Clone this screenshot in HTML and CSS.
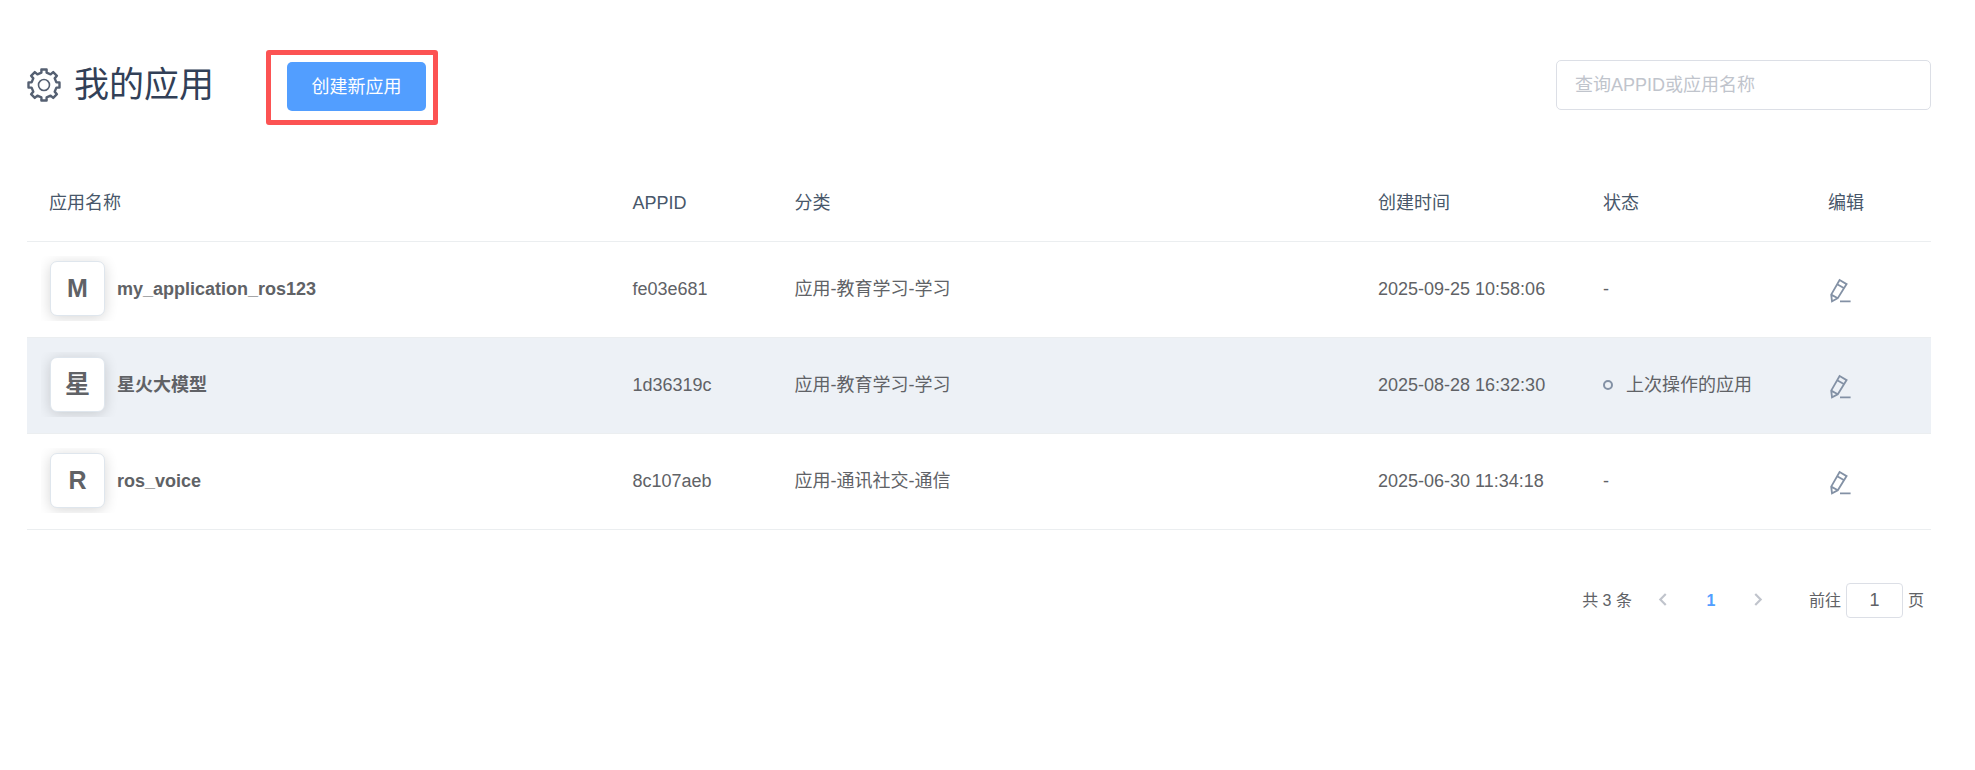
FILE: index.html
```html
<!DOCTYPE html>
<html lang="zh-CN">
<head>
  <meta charset="UTF-8">
  <title>我的应用</title>
  <link rel="stylesheet" href="styles.css">
</head>
<body>
  <svg class="symbols" aria-hidden="true">
    <symbol id="icon-edit" viewBox="0 0 22 26">
      <path d="M9.6 3 16.6 7.1 7.8 21.2 2 24.4 1.2 17.6ZM7.2 7.2l7 4M1.2 17.6l6.6 3.6M10 24.4h10.6"/>
    </symbol>
  </svg>

  <div class="header">
    <h1 class="title">
      <svg class="title-icon" viewBox="0 0 34 34">
        <path d="M14.4 1.5H19.6V4.6L23.6 6.3 26.2 4.1 29.9 7.8 27.7 10.4 29.4 14.4H32.5V19.6H29.4L27.7 23.6 29.9 26.2 26.2 29.9 23.6 27.7 19.6 29.4V32.5H14.4V29.4L10.4 27.7 7.8 29.9 4.1 26.2 6.3 23.6 4.6 19.6H1.5V14.4H4.6L6.3 10.4 4.1 7.8 7.8 4.1 10.4 6.3 14.4 4.6Z"/>
        <circle cx="17" cy="17" r="5.5"/>
      </svg>
      我的应用
    </h1>
    <div class="mark"><button class="btn-create" type="button">创建新应用</button></div>
    <input class="search" type="text" placeholder="查询APPID或应用名称" aria-label="查询APPID或应用名称">
  </div>

  <table class="app-table">
    <colgroup>
      <col><col class="col-id"><col><col class="col-time"><col class="col-status"><col class="col-edit">
    </colgroup>
    <thead>
      <tr>
        <th>应用名称</th>
        <th>APPID</th>
        <th>分类</th>
        <th>创建时间</th>
        <th>状态</th>
        <th>编辑</th>
      </tr>
    </thead>
    <tbody>
      <tr>
        <td><div class="app"><span class="avatar">M</span><span class="name">my_application_ros123</span></div></td>
        <td>fe03e681</td>
        <td>应用-教育学习-学习</td>
        <td>2025-09-25 10:58:06</td>
        <td>-</td>
        <td><button class="btn-edit" type="button" aria-label="编辑"><svg><use href="#icon-edit"/></svg></button></td>
      </tr>
      <tr class="active">
        <td><div class="app"><span class="avatar">星</span><span class="name">星火大模型</span></div></td>
        <td>1d36319c</td>
        <td>应用-教育学习-学习</td>
        <td>2025-08-28 16:32:30</td>
        <td><div class="status"><i class="dot"></i>上次操作的应用</div></td>
        <td><button class="btn-edit" type="button" aria-label="编辑"><svg><use href="#icon-edit"/></svg></button></td>
      </tr>
      <tr>
        <td><div class="app"><span class="avatar">R</span><span class="name">ros_voice</span></div></td>
        <td>8c107aeb</td>
        <td>应用-通讯社交-通信</td>
        <td>2025-06-30 11:34:18</td>
        <td>-</td>
        <td><button class="btn-edit" type="button" aria-label="编辑"><svg><use href="#icon-edit"/></svg></button></td>
      </tr>
    </tbody>
  </table>

  <div class="pagination">
    <span class="total">共 3 条</span>
    <button class="page" type="button" disabled aria-label="上一页"><svg viewBox="0 0 8 12"><path d="M7 1 2 6l5 5"/></svg></button>
    <button class="page current" type="button">1</button>
    <button class="page" type="button" disabled aria-label="下一页"><svg viewBox="0 0 8 12"><path d="m1 1 5 5-5 5"/></svg></button>
    <label class="jump">前往<input type="text" value="1">页</label>
  </div>
</body>
</html>
```

FILE: styles.css
```css
body{margin:0; padding:50px 44px 0 27px; font-family:"Liberation Sans", "Noto Sans CJK SC", sans-serif; font-size:18px; line-height:24px; color:#606266; background-color:#fff;}
button, input{font-family:inherit; box-sizing:border-box;}
.symbols{display:none;}

/* 顶部 */
.header{display:flex; align-items:flex-start;}
.title{display:flex; align-items:center; gap:13px; height:70px; margin:0; font-size:35px; font-weight:normal; line-height:70px; color:#324057;}
.title-icon{width:34px; height:34px; fill:none; stroke:#556072; stroke-width:2.4; stroke-linejoin:round;}
.title-icon circle{stroke-width:1.6;}
.mark{margin-left:52px; padding:7px 7px 9px 16px; border:5px solid #fc5353; border-radius:3px;}
.btn-create{display:block; width:139px; height:49px; padding:0 0 4px; border:0; border-radius:5px; font-size:18px; color:#fff; background-color:#529eff; cursor:pointer;}
.search{width:375px; height:50px; margin:10px 0 0 auto; padding:0 18px; border:1px solid #dcdfe6; border-radius:5px; font-size:18px; color:#606266;}
.search::placeholder{color:#c0c4cc; opacity:1;}

/* 应用列表 */
.app-table{width:100%; margin-top:38px; border-collapse:separate; border-spacing:0; table-layout:fixed;}
.col-id{width:162px;}
.col-time, .col-status{width:225px;}
.col-edit{width:125px;}
.app-table th, .app-table td{box-sizing:border-box; padding:0 0 2px 22px; border-bottom:1px solid #ebeef0; text-align:left; vertical-align:middle;}
.app-table th{height:79px; padding-top:4px; font-weight:normal; color:#48576a;}
.app-table td{height:96px;}
.app-table .active td{background-color:#edf1f6;}
.app{display:flex; align-items:center; gap:12px; height:65px; margin-left:-8px; padding-left:9px; overflow:hidden; font-weight:bold;}
.avatar{box-sizing:border-box; width:55px; height:55px; border:1px solid #dfe6ed; border-radius:7px; font-size:25px; line-height:53px; text-align:center; background-color:#fff; box-shadow:0 2px 14px rgba(0,0,0,.16);}
.status{display:flex; align-items:center; gap:13px;}
.dot{box-sizing:border-box; width:10px; height:10px; border:2px solid #8391a5; border-radius:50%;}
.btn-edit{display:block; padding:2px 0 0 2px; border:0; background:none; cursor:pointer;}
.btn-edit svg{display:block; width:22px; height:26px; fill:none; stroke:#8391a5; stroke-width:1.8;}

/* 分页 */
.pagination{display:flex; align-items:center; justify-content:flex-end; margin-top:53px; padding-right:7px; font-size:16px;}
.total{margin-right:7px;}
.page{width:48px; height:35px; padding:0; border:0; font-size:16px; font-weight:bold; background:none;}
.page svg{width:9px; height:13px; fill:none; stroke:#c0c4cc; stroke-width:2;}
.page.current{color:#529eff;}
.jump{display:flex; align-items:center; gap:5px; margin-left:26px;}
.jump input{width:57px; height:35px; padding:0; border:1px solid #dcdfe6; border-radius:4px; font-size:18px; text-align:center; color:#606266;}
```
